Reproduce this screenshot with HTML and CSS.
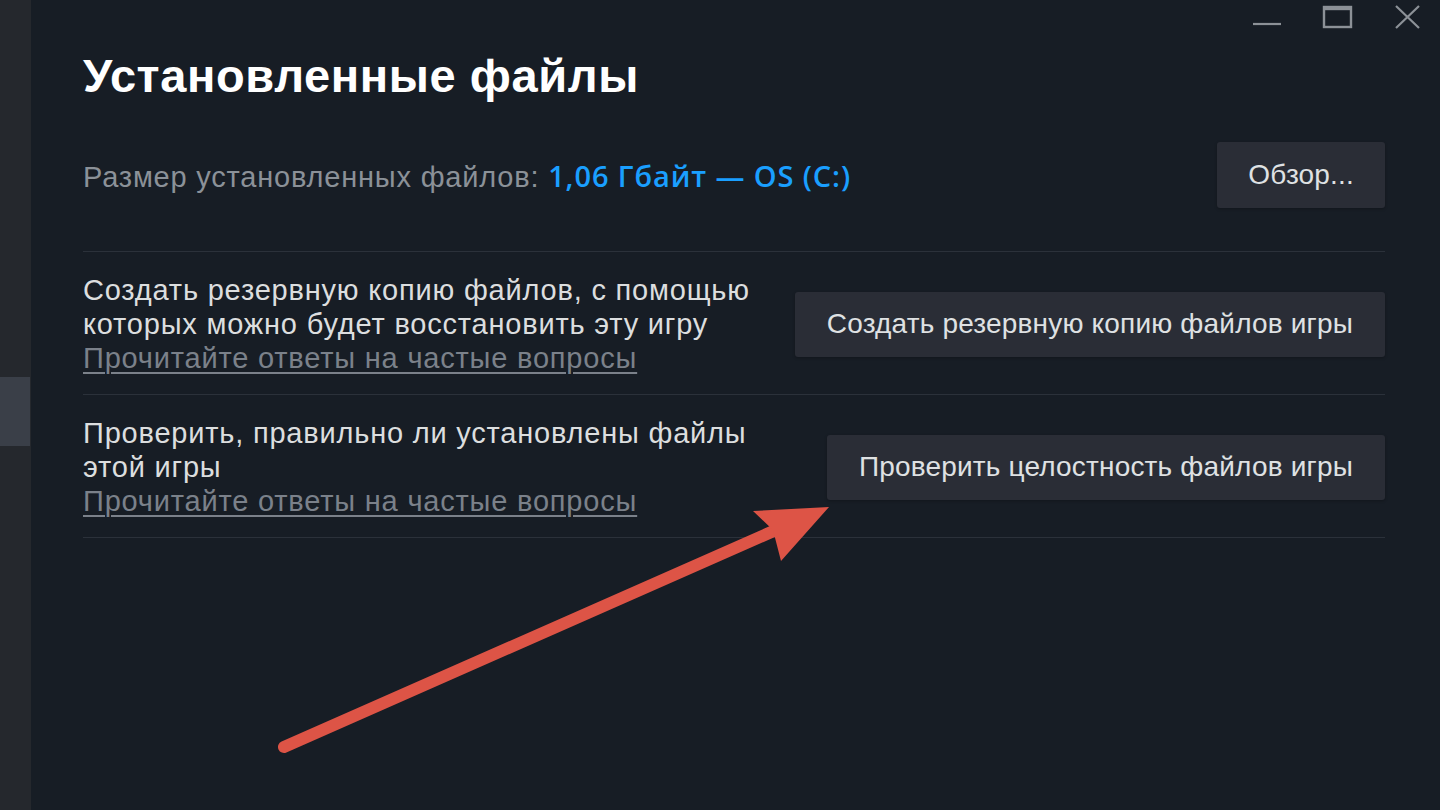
FILE: index.html
```html
<!DOCTYPE html>
<html lang="ru">
<head>
<meta charset="utf-8">
<title>Установленные файлы</title>
<link rel="stylesheet" href="styles.css">
</head>
<body>
<div class="app">
  <aside class="sidebar"><div class="sidebar-mark"></div></aside>
  <main class="main">
    <div class="window-controls">
      <span class="wc wc-min"><svg width="30" height="24" viewBox="0 0 30 24"><line x1="1" y1="19" x2="29" y2="19" stroke="#8c9197" stroke-width="2.2"/></svg></span>
      <span class="wc wc-max"><svg width="32" height="24" viewBox="0 0 32 24"><rect x="2" y="2" width="27" height="20" fill="none" stroke="#8c9197" stroke-width="2.4"/><line x1="2" y1="4" x2="29" y2="4" stroke="#8c9197" stroke-width="2.4"/></svg></span>
      <span class="wc wc-close"><svg width="28" height="24" viewBox="0 0 28 24"><path d="M2 1 L25 23 M25 1 L2 23" stroke="#8c9197" stroke-width="2.2" fill="none"/></svg></span>
    </div>
    <h1 class="title">Установленные файлы</h1>
    <section class="row row-size">
      <div class="size-text">Размер установленных файлов: <span class="size-value">1,06 Гбайт — OS (C:)</span></div>
      <button class="btn btn-browse">Обзор...</button>
    </section>
    <section class="row row-action">
      <div class="desc">
        <div>Создать резервную копию файлов, с помощью<br>которых можно будет восстановить эту игру</div>
        <a class="faq" href="#">Прочитайте ответы на частые вопросы</a>
      </div>
      <button class="btn">Создать резервную копию файлов игры</button>
    </section>
    <section class="row row-action">
      <div class="desc">
        <div>Проверить, правильно ли установлены файлы<br>этой игры</div>
        <a class="faq" href="#">Прочитайте ответы на частые вопросы</a>
      </div>
      <button class="btn">Проверить целостность файлов игры</button>
    </section>
  </main>
</div>
<svg class="arrow" width="1440" height="810" viewBox="0 0 1440 810">
  <line x1="284" y1="747" x2="785" y2="526" stroke="#dd5446" stroke-width="12" stroke-linecap="round"/>
  <path d="M829 507 L753 511 L773 530 L781 561 Z" fill="#dd5446"/>
</svg>
</body>
</html>
```
FILE: styles.css
```css
* { box-sizing: border-box; }
html, body { margin: 0; padding: 0; }
body {
  background: #171d25;
  font-family: "Liberation Sans", Arial, sans-serif;
  color: #dcdedf;
  width: 1440px;
  height: 810px;
  overflow: hidden;
}
.app { display: flex; height: 810px; }
.sidebar {
  width: 31px;
  background: #25282d;
  padding-top: 377px;
}
.sidebar-mark {
  height: 69px;
  width: 30px;
  background: #3a3f48;
}
.main {
  flex: 1;
  position: relative;
  padding: 50px 55px 0 52px;
}
.window-controls {
  position: absolute;
  top: 5px;
  right: 18px;
  display: flex;
}
.wc svg { display: block; }
.wc-min { margin-right: 40px; }
.wc-max { margin-right: 40px; }
.title {
  margin: 0 0 40px;
  font-size: 47px;
  line-height: 52px;
  font-weight: bold;
  color: #ffffff;
  letter-spacing: 0.6px;
}
.row {
  display: flex;
  align-items: center;
  justify-content: space-between;
  border-bottom: 1.5px solid #2b313a;
}
.row-size {
  padding: 0 0 43px;
}
.size-text {
  font-size: 29px;
  letter-spacing: 0.8px;
  color: #8b9198;
}
.size-value {
  font-family: "Open Sans", "Noto Sans", sans-serif;
  font-weight: 600;
  color: #1a9fff;
  font-size: 29px;
  letter-spacing: 0.9px;
}
.row-action {
  padding: 21px 0 19px;
}
.desc {
  font-size: 29px;
  letter-spacing: 0.8px;
  line-height: 34px;
  color: #dcdedf;
}
.faq {
  color: #7b818a;
  text-decoration: underline;
  text-underline-offset: 4px;
  text-decoration-thickness: 1.5px;
}
.btn {
  font-family: "Liberation Sans", Arial, sans-serif;
  font-size: 28px;
  letter-spacing: 0.18px;
  color: #dfe1e3;
  background: #2a2d36;
  border: none;
  border-radius: 3px;
  height: 65px;
  padding: 0 32px;
  box-shadow: 0 1px 3px rgba(0,0,0,0.25);
}
.btn-browse { padding: 0 31px; height: 66px; }
.arrow {
  position: absolute;
  left: 0;
  top: 0;
  pointer-events: none;
}
```
